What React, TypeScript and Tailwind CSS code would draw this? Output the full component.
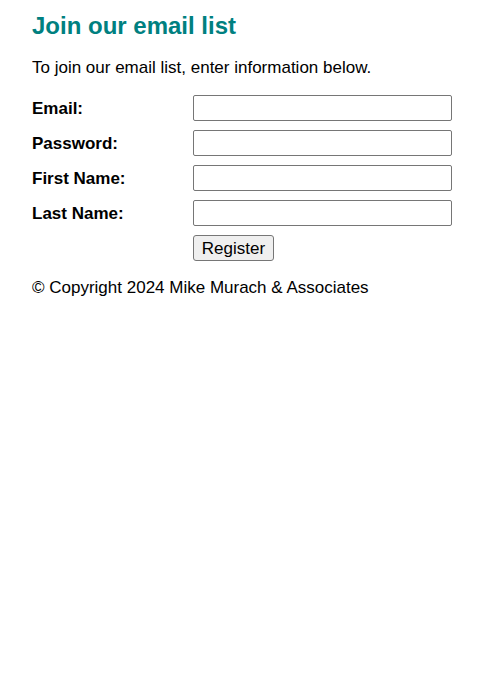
import React from "react";

const rows = ["Email:", "Password:", "First Name:", "Last Name:"];

export default function App() {
  return (
    <div className="min-h-[675px] bg-white pl-[32px] pr-[32px] pt-[12px] text-black" style={{ fontFamily: '"Liberation Sans", Arial, sans-serif' }}>
      <h1 className="text-[24px] leading-[28px] font-bold text-[#008080]">Join our email list</h1>
      <p className="mt-[18px] text-[17px] leading-[19px]">To join our email list, enter information below.</p>
      <form className="mt-[18px] flex flex-col gap-[9px]">
        {rows.map((r) => (
          <div key={r} className="flex items-center">
            <label className="w-[161px] text-[17px] leading-[19px] font-bold">{r}</label>
            <input className="h-[26px] w-[259px] border border-[#767676] rounded-[2px] bg-white" type="text" />
          </div>
        ))}
        <div className="flex">
          <div className="w-[161px]" />
          <button type="button" className="h-[26px] w-[81px] border border-[#767676] rounded-[3px] bg-[#efefef] text-[17px] leading-[19px]">Register</button>
        </div>
      </form>
      <p className="mt-[17px] text-[17px] leading-[19px]">© Copyright 2024 Mike Murach &amp; Associates</p>
    </div>
  );
}
